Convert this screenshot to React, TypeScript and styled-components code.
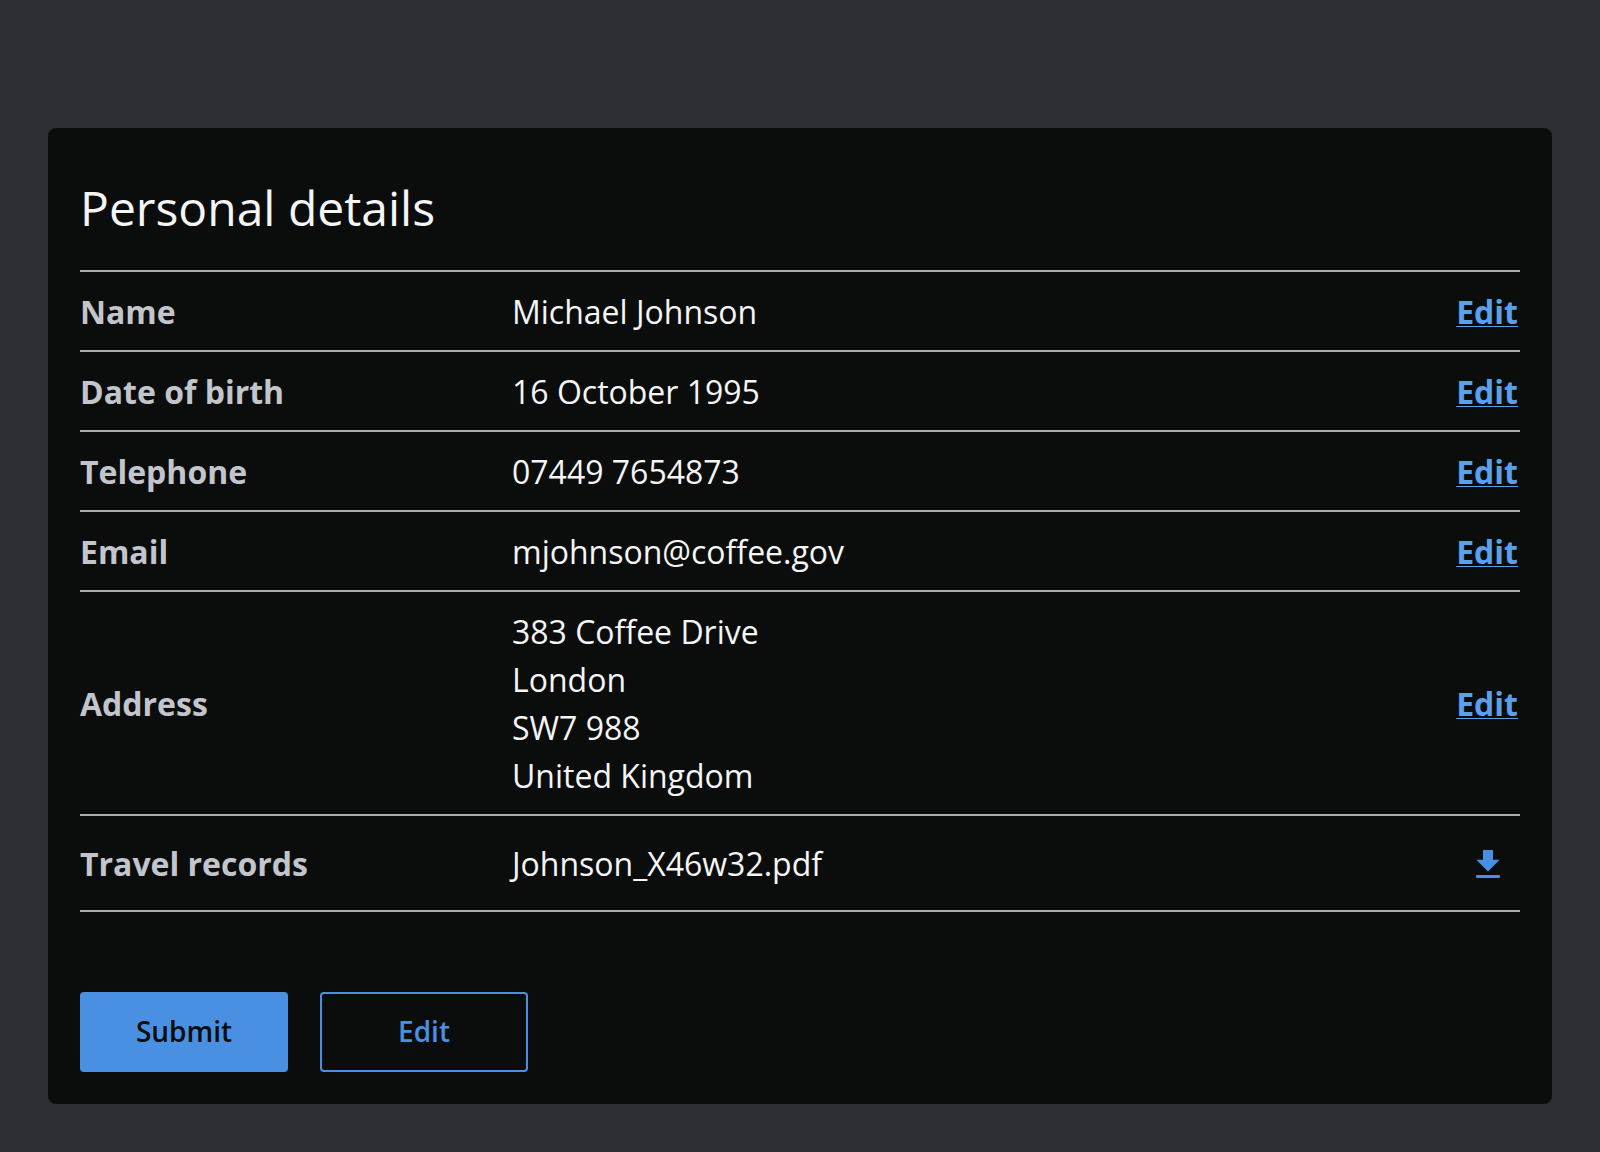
import React from "react";
import styled, { createGlobalStyle } from "styled-components";

const GlobalStyle = createGlobalStyle`
  *, *::before, *::after { box-sizing: border-box; }
  body {
    margin: 0;
    background: #2c2f34;
    color: #f5f5f5;
    font-family: "Open Sans", "Noto Sans", sans-serif;
    font-size: 32px;
    line-height: 48px;
  }
`;

const Page = styled.main`
  padding: 128px 48px 48px;
`;

const Card = styled.section`
  padding: 48px 32px 32px;
  border-radius: 8px;
  background: #0b0d0c;
`;

const Title = styled.h1`
  margin: 0;
  padding-bottom: 30px;
  font-size: 48px;
  font-weight: 400;
  line-height: 64px;
`;

const Summary = styled.dl`
  margin: 0;
  border-top: 2px solid #a8abb3;
`;

const Row = styled.div`
  display: grid;
  grid-template-columns: 30% 1fr auto;
  align-items: center;
  padding: 16px 0 14px;
  border-bottom: 2px solid #a8abb3;
`;

const Label = styled.dt`
  color: #c3c5cc;
  font-weight: 700;
`;

const Value = styled.dd`
  margin: 0;
`;

const Action = styled.dd`
  display: flex;
  margin: 0;
`;

const EditLink = styled.a`
  margin-right: 2px;
  color: #5c9fec;
  font-weight: 700;
  text-decoration: underline;
  text-decoration-thickness: 1px;
  text-underline-offset: 2px;
`;

const IconButton = styled.button`
  display: grid;
  place-items: center;
  width: 64px;
  height: 64px;
  padding: 0;
  border: 0;
  background: none;
  color: #4a90e2;
  cursor: pointer;
`;

const Buttons = styled.div`
  display: flex;
  gap: 32px;
  margin-top: 80px;
`;

const Button = styled.button<{ $primary?: boolean }>`
  min-width: 208px;
  height: 80px;
  padding: 0 32px 2px;
  border: 2px solid #4a90e2;
  border-radius: 4px;
  background: ${(p) => (p.$primary ? "#4a90e2" : "transparent")};
  color: ${(p) => (p.$primary ? "#0b0d0c" : "#4a90e2")};
  font: 600 28px/48px "Open Sans", "Noto Sans", sans-serif;
  cursor: pointer;
`;

const details = [
  { label: "Name", lines: ["Michael Johnson"] },
  { label: "Date of birth", lines: ["16 October 1995"] },
  { label: "Telephone", lines: ["07449 7654873"] },
  { label: "Email", lines: ["mjohnson@coffee.gov"] },
  { label: "Address", lines: ["383 Coffee Drive", "London", "SW7 988", "United Kingdom"] },
];

export default function App() {
  return (
    <>
      <GlobalStyle />
      <Page>
        <Card aria-labelledby="details-title">
          <Title id="details-title">Personal details</Title>
          <Summary>
            {details.map(({ label, lines }) => (
              <Row key={label}>
                <Label>{label}</Label>
                <Value>
                  {lines.map((line) => (
                    <div key={line}>{line}</div>
                  ))}
                </Value>
                <Action>
                  <EditLink href="#edit" aria-label={`Edit ${label}`}>Edit</EditLink>
                </Action>
              </Row>
            ))}
            <Row>
              <Label>Travel records</Label>
              <Value>Johnson_X46w32.pdf</Value>
              <Action>
                <IconButton type="button" aria-label="Download travel records">
                  <svg width="40" height="40" viewBox="0 0 24 24" fill="currentColor" aria-hidden="true">
                    <path d="M19 9.5h-4V3.6H9v5.9H5l7 7zM4.9 18.6v1.8h14.2v-1.8z" />
                  </svg>
                </IconButton>
              </Action>
            </Row>
          </Summary>
          <Buttons>
            <Button type="button" $primary>Submit</Button>
            <Button type="button">Edit</Button>
          </Buttons>
        </Card>
      </Page>
    </>
  );
}
